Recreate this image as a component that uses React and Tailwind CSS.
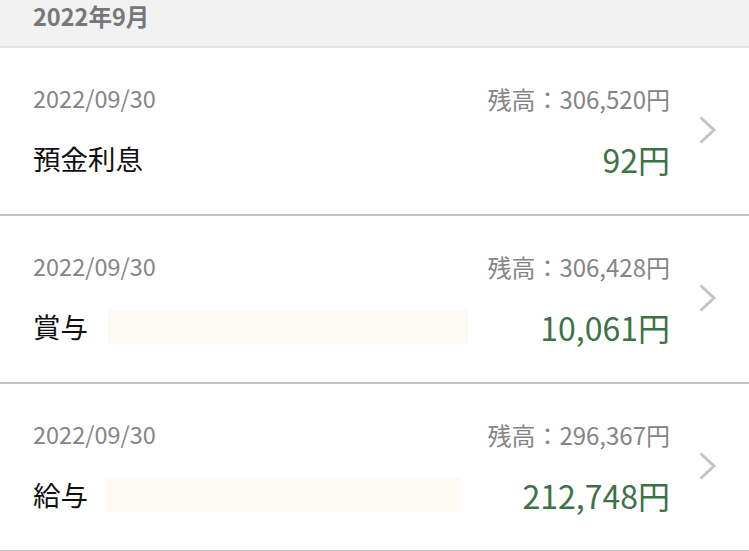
import React from "react";

const rows = [
  { date: "2022/09/30", bal: "残高：306,520円", name: "預金利息", amt: "92円", blur: null },
  { date: "2022/09/30", bal: "残高：306,428円", name: "賞与", amt: "10,061円", blur: "w-[360px] ml-[20px]" },
  { date: "2022/09/30", bal: "残高：296,367円", name: "給与", amt: "212,748円", blur: "w-[355px] ml-[18px]" },
];

function Chevron() {
  return (
    <svg width="20" height="30" viewBox="0 0 20 30" className="shrink-0">
      <path d="M2.5 2.5 L16 15 L2.5 27.5" fill="none" stroke="#c4c4c4" strokeWidth="3" />
    </svg>
  );
}

export default function App() {
  return (
    <div className="w-[749px] h-[551px] overflow-hidden bg-white" style={{ fontFamily: '"Noto Sans CJK JP", "Noto Sans", sans-serif' }}>
      <div className="h-[48px] bg-[#f3f2f3] border-b-2 border-[#e4e3e4] pl-[33px]">
        <div className="text-[23.5px] leading-[32px] font-bold text-[#777]">2022年9月</div>
      </div>
      {rows.map((r, i) => (
        <div key={i} className="h-[168px] flex items-center border-b-2 border-[#c3c3c3] pl-[33px] pr-[31px]">
          <div className="flex-1 flex flex-col">
            <div className="flex justify-between items-center h-[28px] text-[23.5px] text-[#858585]">
              <span>{r.date}</span>
              <span className="text-[24px]">{r.bal}</span>
            </div>
            <div className="flex items-center h-[36px] mt-[28px]">
              <span className="text-[27.5px] text-[#111]">{r.name}</span>
              {r.blur && <div className={`${r.blur} h-[34px] bg-[#fdfaf3]`} />}
              <span className="ml-auto text-[32px] text-[#3c7246]">{r.amt}</span>
            </div>
          </div>
          <div className="ml-[28px] mb-[2px]">
            <Chevron />
          </div>
        </div>
      ))}
    </div>
  );
}
